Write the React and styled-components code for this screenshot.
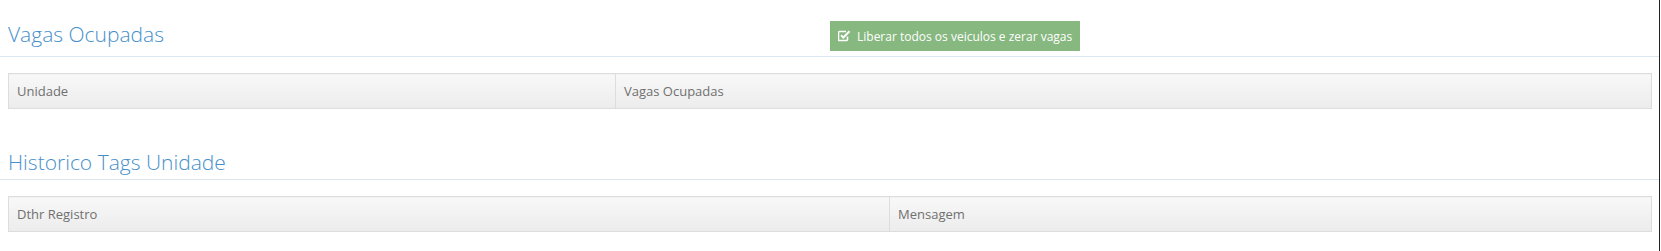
import React from "react";
import styled, { createGlobalStyle } from "styled-components";

const GlobalStyle = createGlobalStyle`
  html, body {
    margin: 0;
    padding: 0;
    background: #ffffff;
  }
  body {
    font-family: "Open Sans", "Liberation Sans", Arial, sans-serif;
    font-size: 13px;
    color: #393939;
  }
`;

const Page = styled.div`
  width: 1660px;
  height: 251px;
  box-sizing: border-box;
  border-right: 1px solid #222;
  background: #fff;
`;

const Section = styled.section`
  padding-bottom: 20px;
`;

const Header = styled.div`
  display: grid;
  grid-template-columns: 830px 1fr;
  align-items: start;
  padding: ${p => (p.$top ? "20px" : "19px")} 0 ${p => (p.$top ? "5px" : "3px")};
  border-bottom: 1px solid #dce6ef;
`;

const Title = styled.h1`
  margin: 0;
  padding-left: 8px;
  font-family: "Open Sans", "Liberation Sans", Arial, sans-serif;
  font-size: 21px;
  font-weight: 300;
  line-height: 28px;
  color: #478fca;
  white-space: nowrap;
`;

const Actions = styled.div`
  display: flex;
`;

const SuccessButton = styled.button`
  display: inline-flex;
  align-items: center;
  gap: 6px;
  height: 30px;
  margin-top: 1px;
  padding: 0 8px 0 8px;
  border: 0;
  background: #87b87f;
  color: #fff;
  font-family: "Open Sans", "Liberation Sans", Arial, sans-serif;
  font-size: 12px;
  cursor: pointer;
  white-space: nowrap;

  &:hover {
    background: #629b58;
  }
`;

const Table = styled.table`
  width: calc(100% - 15px);
  margin: 16px 0 0 8px;
  border-collapse: collapse;
  table-layout: fixed;
`;

const Th = styled.th`
  width: ${p => p.$w || "auto"};
  padding: 8px;
  border: 1px solid #ddd;
  background: linear-gradient(to bottom, #f8f8f8 0%, #ececec 100%);
  color: #707070;
  font-weight: normal;
  font-size: 13px;
  line-height: 18px;
  text-align: left;
`;

const CheckIcon = () => (
  <svg width="13" height="12" viewBox="0 0 13 12" aria-hidden="true">
    <path
      d="M9.5 6.5v3a1 1 0 0 1-1 1h-7a1 1 0 0 1-1-1v-7a1 1 0 0 1 1-1h6.5"
      fill="none"
      stroke="#fff"
      strokeWidth="1.6"
    />
    <path
      d="M3 5.2l2.3 2.3 6.2-6.2"
      fill="none"
      stroke="#fff"
      strokeWidth="2"
    />
  </svg>
);

export default function App() {
  return (
    <Page>
      <GlobalStyle />
      <Section>
        <Header $top>
          <Title>Vagas Ocupadas</Title>
          <Actions>
            <SuccessButton type="button">
              <CheckIcon />
              Liberar todos os veiculos e zerar vagas
            </SuccessButton>
          </Actions>
        </Header>
        <Table>
          <thead>
            <tr>
              <Th $w="590px">Unidade</Th>
              <Th>Vagas Ocupadas</Th>
            </tr>
          </thead>
        </Table>
      </Section>
      <Section>
        <Header>
          <Title>Historico Tags Unidade</Title>
        </Header>
        <Table>
          <thead>
            <tr>
              <Th $w="864px">Dthr Registro</Th>
              <Th>Mensagem</Th>
            </tr>
          </thead>
        </Table>
      </Section>
    </Page>
  );
}
